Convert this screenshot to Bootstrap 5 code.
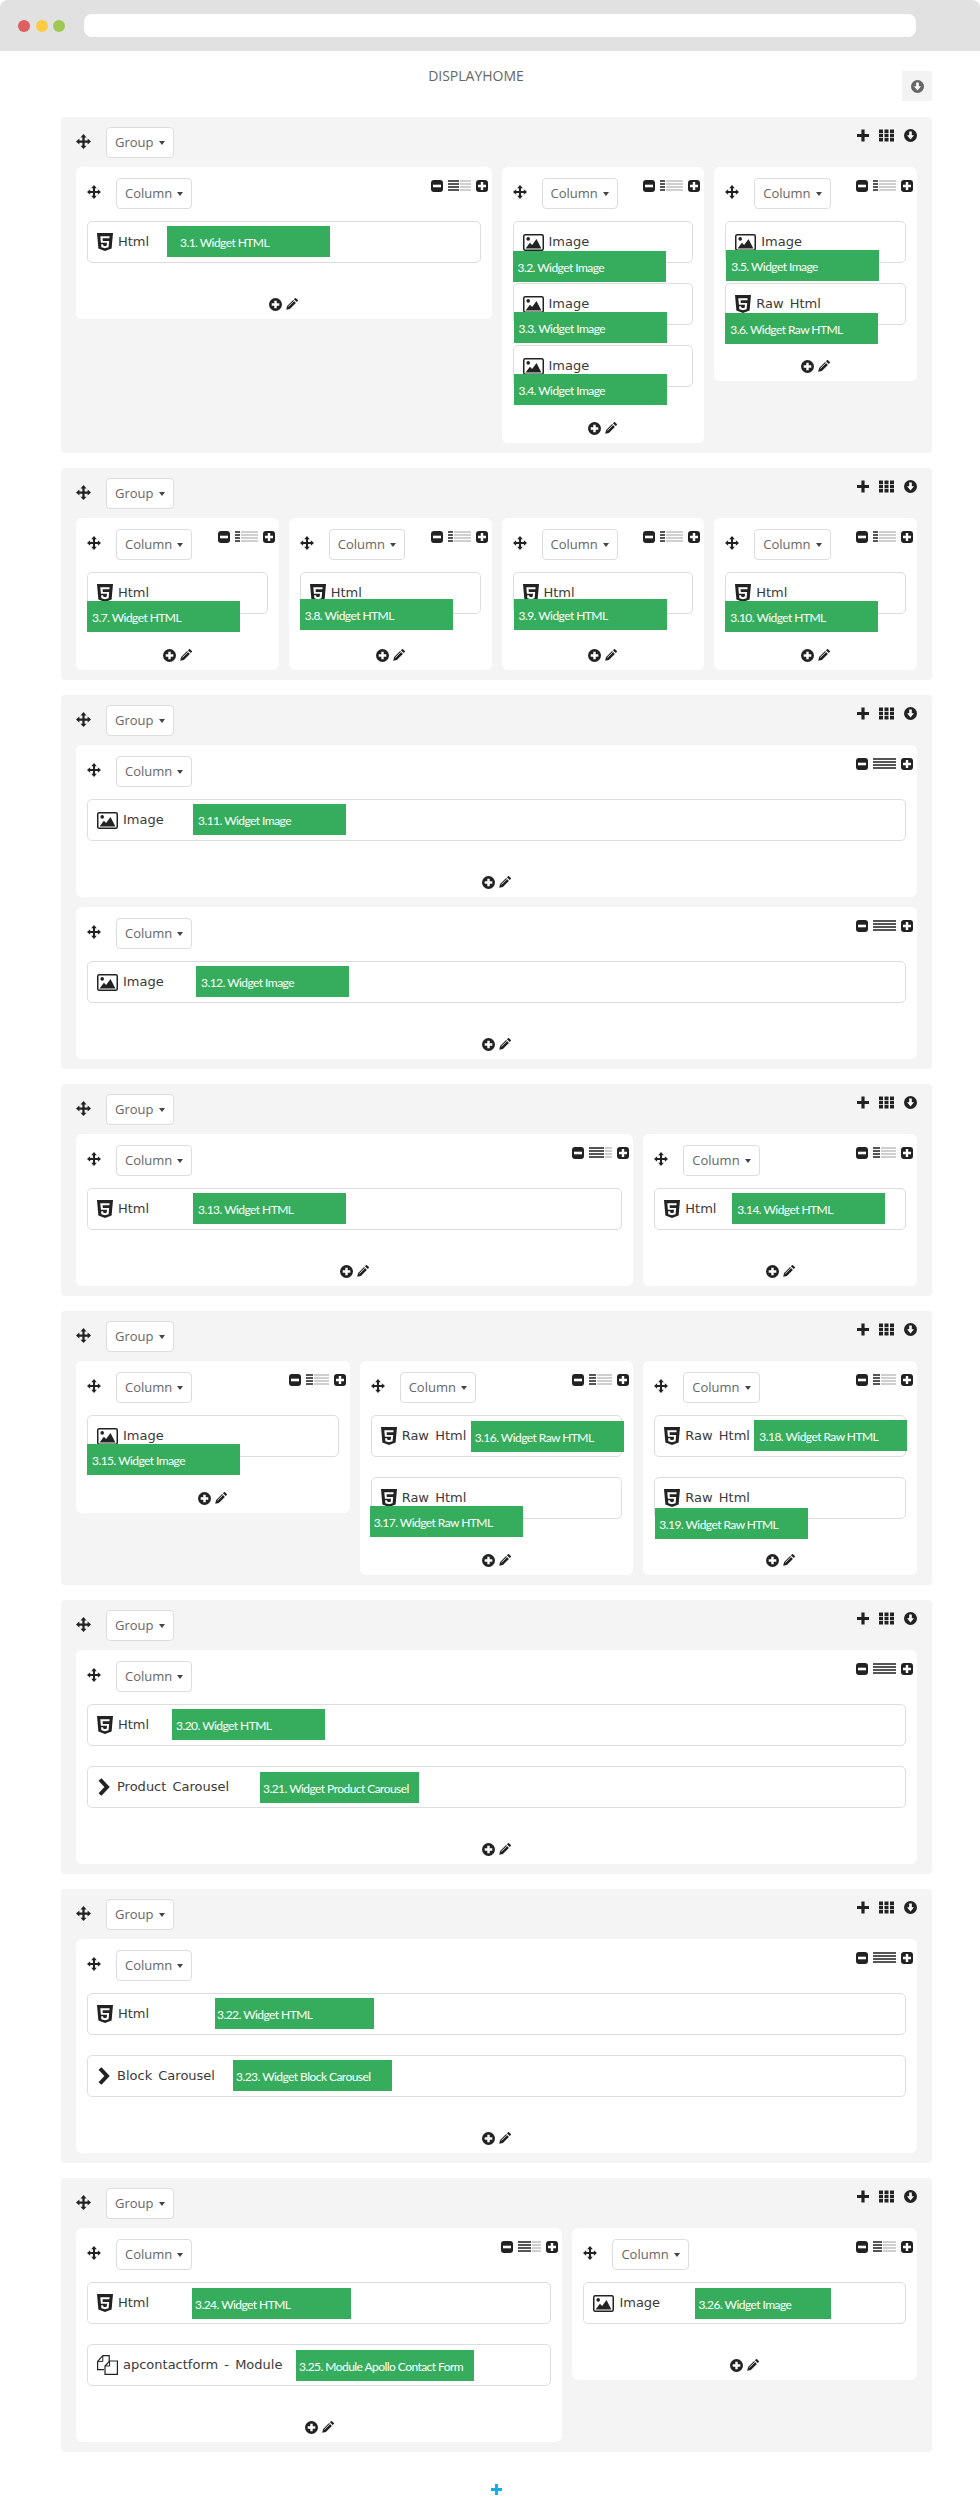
<!DOCTYPE html>
<html lang="en">
<head>
<meta charset="utf-8">
<title>DISPLAYHOME</title>
<link href="https://cdn.jsdelivr.net/npm/bootstrap@5.3.0/dist/css/bootstrap.min.css" rel="stylesheet">
<style>
body{background:#fff;font-family:"Open Sans",sans-serif;color:#222;margin:0}
.browserbar{height:51px;background:#e1e1e1;border-radius:8px 8px 0 0;padding-left:18px;padding-right:64px;gap:5.5px}
.dot{width:12px;height:12px;border-radius:50%}
.dot-r{background:#dd5f5f}.dot-y{background:#fdcb3f}.dot-g{background:#9fc954}
.urlbar{flex:1;height:23px;background:#fff;border-radius:8px;margin-left:13px}
.pagewrap{padding:0 48px 0 61px}
.tophead{height:66px}
.pagetitle{flex:1;text-align:center;font-size:14px;line-height:19px;color:#666;padding:15px 11px 0 0}
.topbtn{width:30px;height:30px;background:#f3f3f3;margin-top:20px;color:#666}
.grp{background:#f4f4f4;border-radius:4px;padding:0 15px;margin-bottom:15px}
.grphead{height:50px;padding-top:10px}
.grpmove{margin-right:15px;margin-top:7px}
.drop{background:#fff;border:1px solid #ddd;border-radius:4px;height:31px;font-size:13px;line-height:29px;color:#666;padding:0 8px;display:inline-block;white-space:nowrap;cursor:default}
.drop.dropdown-toggle::after{margin-left:5px;vertical-align:.15em;border-top-width:.33em;border-right-width:.3em;border-left-width:.3em;color:#444}
.grptools{margin-left:auto;gap:10px;margin-top:2px;height:13px}
.rw{--bs-gutter-x:10px;--bs-gutter-y:0}
.colbox{background:#fff;border-radius:6px;padding:11px 11px 0;margin-bottom:10px}
.colhead{height:43px}
.colmove{margin-right:15px;margin-top:7px}
.coltools{margin-left:auto;margin-right:-7px;margin-top:2px;gap:5px;height:12px}
.lines{display:block;width:23px;height:11px;--d:11px;background-repeat:no-repeat;background-image:repeating-linear-gradient(#555 0 2px,transparent 2px 3px),repeating-linear-gradient(#cfcfcf 0 2px,transparent 2px 3px);background-position:left top,right top;background-size:var(--d) 100%,calc(22px - var(--d)) 100%}
.l3{--d:5px}.l4{--d:7px}.l5{--d:9px}.l6{--d:11px}.l7{--d:13px}.l8{--d:15px}
.l12{--d:23px}
.wgt{position:relative;height:42px;border:1px solid #ddd;border-radius:5px;margin-bottom:20px;padding-left:9px;font-family:"DejaVu Sans",sans-serif;font-size:13px;color:#3a3a3a;word-spacing:2px;white-space:nowrap}
.wgt svg{flex:none}
.ico-html{margin-right:5px}
.ico-img{margin-right:5px}
.ico-chev{margin-right:7px;margin-left:1px}
.ico-mod{margin-right:5px}
.tag{position:absolute;height:31px;width:153px;background:#35ad5c;color:#fff;font-family:"Lato",sans-serif;font-size:12px;letter-spacing:-.55px;word-spacing:0;line-height:33px;padding-left:5px;overflow:hidden;z-index:2}
.t1{left:79px;top:4px;padding-left:13px;width:163px}
.t2{left:-1px;top:29px}
.t3{left:0;top:28px}
.t4{left:0;top:28px}
.t5{left:0;top:28px}
.t6{left:-1px;top:29px}
.t7{left:-1px;top:28px}
.t8{left:-1px;top:26px}
.t9{left:0;top:26px}
.t10{left:-1px;top:28px}
.t11{left:105px;top:4px}
.t12{left:108px;top:4px}
.t13{left:105px;top:4px}
.t14{left:77px;top:4px}
.t15{left:-1px;top:28px}
.t16{left:99px;top:5px;padding-left:4px}
.t17{left:-2px;top:28px;padding-left:4px}
.t18{left:99px;top:4px}
.t19{left:0;top:30px;padding-left:4px}
.t20{left:84px;top:4px;padding-left:4px}
.t21{left:172px;top:5px;width:159px;padding-left:3px}
.t22{left:127px;top:4px;width:159px;padding-left:2px}
.t23{left:145px;top:4px;width:159px;padding-left:3px}
.t24{left:104px;top:5px;width:159px;padding-left:3px}
.t25{left:208px;top:5px;width:178px;padding-left:3px}
.t26{left:111px;top:5px;width:136px;padding-left:3px}
.colfoot{height:36px;padding-top:15px;gap:4px;align-items:flex-start}
.addline{padding-top:17px;line-height:0;color:#10aee8}
</style>
</head>
<body>
<svg width="0" height="0" class="position-absolute">
<defs>
<symbol id="i-move" viewBox="0 0 16 16"><path fill="#222" d="M8 0l3.2 3.6H9.2V6.8h3.2V4.8L16 8l-3.6 3.2V9.2H9.2v3.2h2L8 16l-3.2-3.6h2V9.2H3.6v2L0 8l3.6-3.2v2h3.2V3.6h-2z"/></symbol>
<symbol id="i-html" viewBox="0 0 16 18"><path fill="#222" d="M0 0h16l-1.4 15.6L8 18l-6.6-2.4z"/><path fill="#fff" d="M12.6 3.2H3.3l.6 6.6H10l-.25 2.8L8 13.2l-1.8-.6-.1-1.3H4.1l.25 2.9L8 15.3l3.6-1.1.55-6.3H5.8l-.2-2.6h6.8z"/></symbol>
<symbol id="i-img" viewBox="0 0 21 17"><rect x=".75" y=".75" width="19.5" height="15.5" rx="1.5" fill="#fff" stroke="#222" stroke-width="1.5"/><circle cx="5.2" cy="4.9" r="1.8" fill="#222"/><path fill="#222" d="M2.6 14.4l4.3-5.6 2.2 2.2L13.5 5l4.9 9.4z"/></symbol>
<symbol id="i-chev" viewBox="0 0 12 18"><path fill="none" stroke="#222" stroke-width="4" d="M2 1.5L9 9l-7 7.5"/></symbol>
<symbol id="i-mod" viewBox="0 0 21 20"><g fill="#fff" stroke="#222" stroke-width="1.2"><path d="M7 14.6H.6V6.4L5.8.6h6.4v6"/><path d="M8 19.4V11l4.6-5h7.8v13.4z"/></g><path fill="none" stroke="#222" d="M.8 6.4h5V1M8 11h4.6V6"/></symbol>
<symbol id="i-cplus" viewBox="0 0 13 13"><circle cx="6.5" cy="6.5" r="6.5" fill="#222"/><path fill="#fff" d="M5.3 2.7h2.4v2.6h2.6v2.4H7.7v2.6H5.3V7.7H2.7V5.3h2.6z"/></symbol>
<symbol id="i-cdown" viewBox="0 0 13 13"><circle cx="6.5" cy="6.5" r="6.5" fill="currentColor"/><path fill="#fff" d="M5.2 2.6h2.6v3.6h2.2L6.5 10.4 3 6.2h2.2z"/></symbol>
<symbol id="i-pen" viewBox="0 0 12 12"><path fill="#222" d="M.2 11.8l.9-3.7 6-6 2.8 2.8-6 6zM7.9 1.3L9 .2a.7.7 0 0 1 1 0l1.8 1.8a.7.7 0 0 1 0 1l-1.1 1.1z"/><path fill="none" stroke="#fff" stroke-width=".8" d="M2.3 8.6l5.5-5.5"/></symbol>
<symbol id="i-sminus" viewBox="0 0 12 12"><rect width="12" height="12" rx="3" fill="#222"/><rect x="2" y="4.7" width="8" height="2.6" fill="#fff"/></symbol>
<symbol id="i-splus" viewBox="0 0 12 12"><rect width="12" height="12" rx="3" fill="#222"/><path fill="#fff" d="M4.8 2h2.4v2.8H10v2.4H7.2V10H4.8V7.2H2V4.8h2.8z"/></symbol>
<symbol id="i-plus" viewBox="0 0 12 12"><path fill="currentColor" d="M4.4 0h3.2v4.4H12v3.2H7.6V12H4.4V7.6H0V4.4h4.4z"/></symbol>
<symbol id="i-grid" viewBox="0 0 15 12"><path fill="#222" d="M0 0h4v3.4H0zM5.5 0h4v3.4h-4zM11 0h4v3.4h-4zM0 4.3h4v3.4H0zM5.5 4.3h4v3.4h-4zM11 4.3h4v3.4h-4zM0 8.6h4V12H0zM5.5 8.6h4V12h-4zM11 8.6h4V12h-4z"/></symbol>
</defs>
</svg>

<div class="browserbar d-flex align-items-center">
  <span class="dot dot-r"></span><span class="dot dot-y"></span><span class="dot dot-g"></span>
  <div class="urlbar"></div>
</div>

<div class="pagewrap">
  <div class="tophead d-flex">
    <div class="pagetitle">DISPLAYHOME</div>
    <div class="topbtn d-flex align-items-center justify-content-center"><svg width="13" height="13"><use href="#i-cdown"/></svg></div>
  </div>

  <!-- Group 1 -->
  <div class="grp">
    <div class="grphead d-flex align-items-start">
      <svg class="grpmove" width="15" height="15"><use href="#i-move"/></svg>
      <span class="drop dropdown-toggle">Group</span>
      <div class="grptools d-flex"><svg width="12" height="13"><use href="#i-plus"/></svg><svg width="15" height="13"><use href="#i-grid"/></svg><svg width="13" height="13"><use href="#i-cdown"/></svg></div>
    </div>
    <div class="row rw">
      <div class="col-6"><div class="colbox">
        <div class="colhead d-flex align-items-start"><svg class="colmove" width="14" height="14"><use href="#i-move"/></svg><span class="drop dropdown-toggle">Column</span><div class="coltools d-flex"><svg width="12" height="12"><use href="#i-sminus"/></svg><span class="lines l6"></span><svg width="12" height="12"><use href="#i-splus"/></svg></div></div>
        <div class="wgt d-flex align-items-center"><svg class="ico-html" width="16" height="18"><use href="#i-html"/></svg>Html<span class="tag t1">3.1. Widget HTML</span></div>
        <div class="colfoot d-flex justify-content-center"><svg width="13" height="13"><use href="#i-cplus"/></svg><svg width="12" height="12"><use href="#i-pen"/></svg></div>
      </div></div>
      <div class="col-3"><div class="colbox">
        <div class="colhead d-flex align-items-start"><svg class="colmove" width="14" height="14"><use href="#i-move"/></svg><span class="drop dropdown-toggle">Column</span><div class="coltools d-flex"><svg width="12" height="12"><use href="#i-sminus"/></svg><span class="lines l3"></span><svg width="12" height="12"><use href="#i-splus"/></svg></div></div>
        <div class="wgt d-flex align-items-center"><svg class="ico-img" width="21" height="17"><use href="#i-img"/></svg>Image<span class="tag t2">3.2. Widget Image</span></div>
        <div class="wgt d-flex align-items-center"><svg class="ico-img" width="21" height="17"><use href="#i-img"/></svg>Image<span class="tag t3">3.3. Widget Image</span></div>
        <div class="wgt d-flex align-items-center"><svg class="ico-img" width="21" height="17"><use href="#i-img"/></svg>Image<span class="tag t4">3.4. Widget Image</span></div>
        <div class="colfoot d-flex justify-content-center"><svg width="13" height="13"><use href="#i-cplus"/></svg><svg width="12" height="12"><use href="#i-pen"/></svg></div>
      </div></div>
      <div class="col-3"><div class="colbox">
        <div class="colhead d-flex align-items-start"><svg class="colmove" width="14" height="14"><use href="#i-move"/></svg><span class="drop dropdown-toggle">Column</span><div class="coltools d-flex"><svg width="12" height="12"><use href="#i-sminus"/></svg><span class="lines l3"></span><svg width="12" height="12"><use href="#i-splus"/></svg></div></div>
        <div class="wgt d-flex align-items-center"><svg class="ico-img" width="21" height="17"><use href="#i-img"/></svg>Image<span class="tag t5">3.5. Widget Image</span></div>
        <div class="wgt d-flex align-items-center"><svg class="ico-html" width="16" height="18"><use href="#i-html"/></svg>Raw Html<span class="tag t6">3.6. Widget Raw HTML</span></div>
        <div class="colfoot d-flex justify-content-center"><svg width="13" height="13"><use href="#i-cplus"/></svg><svg width="12" height="12"><use href="#i-pen"/></svg></div>
      </div></div>
    </div>
  </div>

  <!-- Group 2 -->
  <div class="grp">
    <div class="grphead d-flex align-items-start">
      <svg class="grpmove" width="15" height="15"><use href="#i-move"/></svg>
      <span class="drop dropdown-toggle">Group</span>
      <div class="grptools d-flex"><svg width="12" height="13"><use href="#i-plus"/></svg><svg width="15" height="13"><use href="#i-grid"/></svg><svg width="13" height="13"><use href="#i-cdown"/></svg></div>
    </div>
    <div class="row rw">
      <div class="col-3"><div class="colbox">
        <div class="colhead d-flex align-items-start"><svg class="colmove" width="14" height="14"><use href="#i-move"/></svg><span class="drop dropdown-toggle">Column</span><div class="coltools d-flex"><svg width="12" height="12"><use href="#i-sminus"/></svg><span class="lines l3"></span><svg width="12" height="12"><use href="#i-splus"/></svg></div></div>
        <div class="wgt d-flex align-items-center"><svg class="ico-html" width="16" height="18"><use href="#i-html"/></svg>Html<span class="tag t7">3.7. Widget HTML</span></div>
        <div class="colfoot d-flex justify-content-center"><svg width="13" height="13"><use href="#i-cplus"/></svg><svg width="12" height="12"><use href="#i-pen"/></svg></div>
      </div></div>
      <div class="col-3"><div class="colbox">
        <div class="colhead d-flex align-items-start"><svg class="colmove" width="14" height="14"><use href="#i-move"/></svg><span class="drop dropdown-toggle">Column</span><div class="coltools d-flex"><svg width="12" height="12"><use href="#i-sminus"/></svg><span class="lines l3"></span><svg width="12" height="12"><use href="#i-splus"/></svg></div></div>
        <div class="wgt d-flex align-items-center"><svg class="ico-html" width="16" height="18"><use href="#i-html"/></svg>Html<span class="tag t8">3.8. Widget HTML</span></div>
        <div class="colfoot d-flex justify-content-center"><svg width="13" height="13"><use href="#i-cplus"/></svg><svg width="12" height="12"><use href="#i-pen"/></svg></div>
      </div></div>
      <div class="col-3"><div class="colbox">
        <div class="colhead d-flex align-items-start"><svg class="colmove" width="14" height="14"><use href="#i-move"/></svg><span class="drop dropdown-toggle">Column</span><div class="coltools d-flex"><svg width="12" height="12"><use href="#i-sminus"/></svg><span class="lines l3"></span><svg width="12" height="12"><use href="#i-splus"/></svg></div></div>
        <div class="wgt d-flex align-items-center"><svg class="ico-html" width="16" height="18"><use href="#i-html"/></svg>Html<span class="tag t9">3.9. Widget HTML</span></div>
        <div class="colfoot d-flex justify-content-center"><svg width="13" height="13"><use href="#i-cplus"/></svg><svg width="12" height="12"><use href="#i-pen"/></svg></div>
      </div></div>
      <div class="col-3"><div class="colbox">
        <div class="colhead d-flex align-items-start"><svg class="colmove" width="14" height="14"><use href="#i-move"/></svg><span class="drop dropdown-toggle">Column</span><div class="coltools d-flex"><svg width="12" height="12"><use href="#i-sminus"/></svg><span class="lines l3"></span><svg width="12" height="12"><use href="#i-splus"/></svg></div></div>
        <div class="wgt d-flex align-items-center"><svg class="ico-html" width="16" height="18"><use href="#i-html"/></svg>Html<span class="tag t10">3.10. Widget HTML</span></div>
        <div class="colfoot d-flex justify-content-center"><svg width="13" height="13"><use href="#i-cplus"/></svg><svg width="12" height="12"><use href="#i-pen"/></svg></div>
      </div></div>
    </div>
  </div>

  <!-- Group 3 -->
  <div class="grp">
    <div class="grphead d-flex align-items-start">
      <svg class="grpmove" width="15" height="15"><use href="#i-move"/></svg>
      <span class="drop dropdown-toggle">Group</span>
      <div class="grptools d-flex"><svg width="12" height="13"><use href="#i-plus"/></svg><svg width="15" height="13"><use href="#i-grid"/></svg><svg width="13" height="13"><use href="#i-cdown"/></svg></div>
    </div>
    <div class="row rw">
      <div class="col-12"><div class="colbox">
        <div class="colhead d-flex align-items-start"><svg class="colmove" width="14" height="14"><use href="#i-move"/></svg><span class="drop dropdown-toggle">Column</span><div class="coltools d-flex"><svg width="12" height="12"><use href="#i-sminus"/></svg><span class="lines l12"></span><svg width="12" height="12"><use href="#i-splus"/></svg></div></div>
        <div class="wgt d-flex align-items-center"><svg class="ico-img" width="21" height="17"><use href="#i-img"/></svg>Image<span class="tag t11">3.11. Widget Image</span></div>
        <div class="colfoot d-flex justify-content-center"><svg width="13" height="13"><use href="#i-cplus"/></svg><svg width="12" height="12"><use href="#i-pen"/></svg></div>
      </div></div>
      <div class="col-12"><div class="colbox">
        <div class="colhead d-flex align-items-start"><svg class="colmove" width="14" height="14"><use href="#i-move"/></svg><span class="drop dropdown-toggle">Column</span><div class="coltools d-flex"><svg width="12" height="12"><use href="#i-sminus"/></svg><span class="lines l12"></span><svg width="12" height="12"><use href="#i-splus"/></svg></div></div>
        <div class="wgt d-flex align-items-center"><svg class="ico-img" width="21" height="17"><use href="#i-img"/></svg>Image<span class="tag t12">3.12. Widget Image</span></div>
        <div class="colfoot d-flex justify-content-center"><svg width="13" height="13"><use href="#i-cplus"/></svg><svg width="12" height="12"><use href="#i-pen"/></svg></div>
      </div></div>
    </div>
  </div>

  <!-- Group 4 -->
  <div class="grp">
    <div class="grphead d-flex align-items-start">
      <svg class="grpmove" width="15" height="15"><use href="#i-move"/></svg>
      <span class="drop dropdown-toggle">Group</span>
      <div class="grptools d-flex"><svg width="12" height="13"><use href="#i-plus"/></svg><svg width="15" height="13"><use href="#i-grid"/></svg><svg width="13" height="13"><use href="#i-cdown"/></svg></div>
    </div>
    <div class="row rw">
      <div class="col-8"><div class="colbox">
        <div class="colhead d-flex align-items-start"><svg class="colmove" width="14" height="14"><use href="#i-move"/></svg><span class="drop dropdown-toggle">Column</span><div class="coltools d-flex"><svg width="12" height="12"><use href="#i-sminus"/></svg><span class="lines l8"></span><svg width="12" height="12"><use href="#i-splus"/></svg></div></div>
        <div class="wgt d-flex align-items-center"><svg class="ico-html" width="16" height="18"><use href="#i-html"/></svg>Html<span class="tag t13">3.13. Widget HTML</span></div>
        <div class="colfoot d-flex justify-content-center"><svg width="13" height="13"><use href="#i-cplus"/></svg><svg width="12" height="12"><use href="#i-pen"/></svg></div>
      </div></div>
      <div class="col-4"><div class="colbox">
        <div class="colhead d-flex align-items-start"><svg class="colmove" width="14" height="14"><use href="#i-move"/></svg><span class="drop dropdown-toggle">Column</span><div class="coltools d-flex"><svg width="12" height="12"><use href="#i-sminus"/></svg><span class="lines l4"></span><svg width="12" height="12"><use href="#i-splus"/></svg></div></div>
        <div class="wgt d-flex align-items-center"><svg class="ico-html" width="16" height="18"><use href="#i-html"/></svg>Html<span class="tag t14">3.14. Widget HTML</span></div>
        <div class="colfoot d-flex justify-content-center"><svg width="13" height="13"><use href="#i-cplus"/></svg><svg width="12" height="12"><use href="#i-pen"/></svg></div>
      </div></div>
    </div>
  </div>

  <!-- Group 5 -->
  <div class="grp">
    <div class="grphead d-flex align-items-start">
      <svg class="grpmove" width="15" height="15"><use href="#i-move"/></svg>
      <span class="drop dropdown-toggle">Group</span>
      <div class="grptools d-flex"><svg width="12" height="13"><use href="#i-plus"/></svg><svg width="15" height="13"><use href="#i-grid"/></svg><svg width="13" height="13"><use href="#i-cdown"/></svg></div>
    </div>
    <div class="row rw">
      <div class="col-4"><div class="colbox">
        <div class="colhead d-flex align-items-start"><svg class="colmove" width="14" height="14"><use href="#i-move"/></svg><span class="drop dropdown-toggle">Column</span><div class="coltools d-flex"><svg width="12" height="12"><use href="#i-sminus"/></svg><span class="lines l4"></span><svg width="12" height="12"><use href="#i-splus"/></svg></div></div>
        <div class="wgt d-flex align-items-center"><svg class="ico-img" width="21" height="17"><use href="#i-img"/></svg>Image<span class="tag t15">3.15. Widget Image</span></div>
        <div class="colfoot d-flex justify-content-center"><svg width="13" height="13"><use href="#i-cplus"/></svg><svg width="12" height="12"><use href="#i-pen"/></svg></div>
      </div></div>
      <div class="col-4"><div class="colbox">
        <div class="colhead d-flex align-items-start"><svg class="colmove" width="14" height="14"><use href="#i-move"/></svg><span class="drop dropdown-toggle">Column</span><div class="coltools d-flex"><svg width="12" height="12"><use href="#i-sminus"/></svg><span class="lines l4"></span><svg width="12" height="12"><use href="#i-splus"/></svg></div></div>
        <div class="wgt d-flex align-items-center"><svg class="ico-html" width="16" height="18"><use href="#i-html"/></svg>Raw Html<span class="tag t16">3.16. Widget Raw HTML</span></div>
        <div class="wgt d-flex align-items-center"><svg class="ico-html" width="16" height="18"><use href="#i-html"/></svg>Raw Html<span class="tag t17">3.17. Widget Raw HTML</span></div>
        <div class="colfoot d-flex justify-content-center"><svg width="13" height="13"><use href="#i-cplus"/></svg><svg width="12" height="12"><use href="#i-pen"/></svg></div>
      </div></div>
      <div class="col-4"><div class="colbox">
        <div class="colhead d-flex align-items-start"><svg class="colmove" width="14" height="14"><use href="#i-move"/></svg><span class="drop dropdown-toggle">Column</span><div class="coltools d-flex"><svg width="12" height="12"><use href="#i-sminus"/></svg><span class="lines l4"></span><svg width="12" height="12"><use href="#i-splus"/></svg></div></div>
        <div class="wgt d-flex align-items-center"><svg class="ico-html" width="16" height="18"><use href="#i-html"/></svg>Raw Html<span class="tag t18">3.18. Widget Raw HTML</span></div>
        <div class="wgt d-flex align-items-center"><svg class="ico-html" width="16" height="18"><use href="#i-html"/></svg>Raw Html<span class="tag t19">3.19. Widget Raw HTML</span></div>
        <div class="colfoot d-flex justify-content-center"><svg width="13" height="13"><use href="#i-cplus"/></svg><svg width="12" height="12"><use href="#i-pen"/></svg></div>
      </div></div>
    </div>
  </div>

  <!-- Group 6 -->
  <div class="grp">
    <div class="grphead d-flex align-items-start">
      <svg class="grpmove" width="15" height="15"><use href="#i-move"/></svg>
      <span class="drop dropdown-toggle">Group</span>
      <div class="grptools d-flex"><svg width="12" height="13"><use href="#i-plus"/></svg><svg width="15" height="13"><use href="#i-grid"/></svg><svg width="13" height="13"><use href="#i-cdown"/></svg></div>
    </div>
    <div class="row rw">
      <div class="col-12"><div class="colbox">
        <div class="colhead d-flex align-items-start"><svg class="colmove" width="14" height="14"><use href="#i-move"/></svg><span class="drop dropdown-toggle">Column</span><div class="coltools d-flex"><svg width="12" height="12"><use href="#i-sminus"/></svg><span class="lines l12"></span><svg width="12" height="12"><use href="#i-splus"/></svg></div></div>
        <div class="wgt d-flex align-items-center"><svg class="ico-html" width="16" height="18"><use href="#i-html"/></svg>Html<span class="tag t20">3.20. Widget HTML</span></div>
        <div class="wgt d-flex align-items-center"><svg class="ico-chev" width="12" height="18"><use href="#i-chev"/></svg>Product Carousel<span class="tag t21">3.21. Widget Product Carousel</span></div>
        <div class="colfoot d-flex justify-content-center"><svg width="13" height="13"><use href="#i-cplus"/></svg><svg width="12" height="12"><use href="#i-pen"/></svg></div>
      </div></div>
    </div>
  </div>

  <!-- Group 7 -->
  <div class="grp">
    <div class="grphead d-flex align-items-start">
      <svg class="grpmove" width="15" height="15"><use href="#i-move"/></svg>
      <span class="drop dropdown-toggle">Group</span>
      <div class="grptools d-flex"><svg width="12" height="13"><use href="#i-plus"/></svg><svg width="15" height="13"><use href="#i-grid"/></svg><svg width="13" height="13"><use href="#i-cdown"/></svg></div>
    </div>
    <div class="row rw">
      <div class="col-12"><div class="colbox">
        <div class="colhead d-flex align-items-start"><svg class="colmove" width="14" height="14"><use href="#i-move"/></svg><span class="drop dropdown-toggle">Column</span><div class="coltools d-flex"><svg width="12" height="12"><use href="#i-sminus"/></svg><span class="lines l12"></span><svg width="12" height="12"><use href="#i-splus"/></svg></div></div>
        <div class="wgt d-flex align-items-center"><svg class="ico-html" width="16" height="18"><use href="#i-html"/></svg>Html<span class="tag t22">3.22. Widget HTML</span></div>
        <div class="wgt d-flex align-items-center"><svg class="ico-chev" width="12" height="18"><use href="#i-chev"/></svg>Block Carousel<span class="tag t23">3.23. Widget Block Carousel</span></div>
        <div class="colfoot d-flex justify-content-center"><svg width="13" height="13"><use href="#i-cplus"/></svg><svg width="12" height="12"><use href="#i-pen"/></svg></div>
      </div></div>
    </div>
  </div>

  <!-- Group 8 -->
  <div class="grp">
    <div class="grphead d-flex align-items-start">
      <svg class="grpmove" width="15" height="15"><use href="#i-move"/></svg>
      <span class="drop dropdown-toggle">Group</span>
      <div class="grptools d-flex"><svg width="12" height="13"><use href="#i-plus"/></svg><svg width="15" height="13"><use href="#i-grid"/></svg><svg width="13" height="13"><use href="#i-cdown"/></svg></div>
    </div>
    <div class="row rw">
      <div class="col-7"><div class="colbox">
        <div class="colhead d-flex align-items-start"><svg class="colmove" width="14" height="14"><use href="#i-move"/></svg><span class="drop dropdown-toggle">Column</span><div class="coltools d-flex"><svg width="12" height="12"><use href="#i-sminus"/></svg><span class="lines l7"></span><svg width="12" height="12"><use href="#i-splus"/></svg></div></div>
        <div class="wgt d-flex align-items-center"><svg class="ico-html" width="16" height="18"><use href="#i-html"/></svg>Html<span class="tag t24">3.24. Widget HTML</span></div>
        <div class="wgt d-flex align-items-center"><svg class="ico-mod" width="21" height="20"><use href="#i-mod"/></svg>apcontactform - Module<span class="tag t25">3.25. Module Apollo Contact Form</span></div>
        <div class="colfoot d-flex justify-content-center"><svg width="13" height="13"><use href="#i-cplus"/></svg><svg width="12" height="12"><use href="#i-pen"/></svg></div>
      </div></div>
      <div class="col-5"><div class="colbox">
        <div class="colhead d-flex align-items-start"><svg class="colmove" width="14" height="14"><use href="#i-move"/></svg><span class="drop dropdown-toggle">Column</span><div class="coltools d-flex"><svg width="12" height="12"><use href="#i-sminus"/></svg><span class="lines l5"></span><svg width="12" height="12"><use href="#i-splus"/></svg></div></div>
        <div class="wgt d-flex align-items-center"><svg class="ico-img" width="21" height="17"><use href="#i-img"/></svg>Image<span class="tag t26">3.26. Widget Image</span></div>
        <div class="colfoot d-flex justify-content-center"><svg width="13" height="13"><use href="#i-cplus"/></svg><svg width="12" height="12"><use href="#i-pen"/></svg></div>
      </div></div>
    </div>
  </div>

  <div class="addline d-flex justify-content-center"><svg width="11" height="11"><use href="#i-plus"/></svg></div>
</div>

</body>
</html>
